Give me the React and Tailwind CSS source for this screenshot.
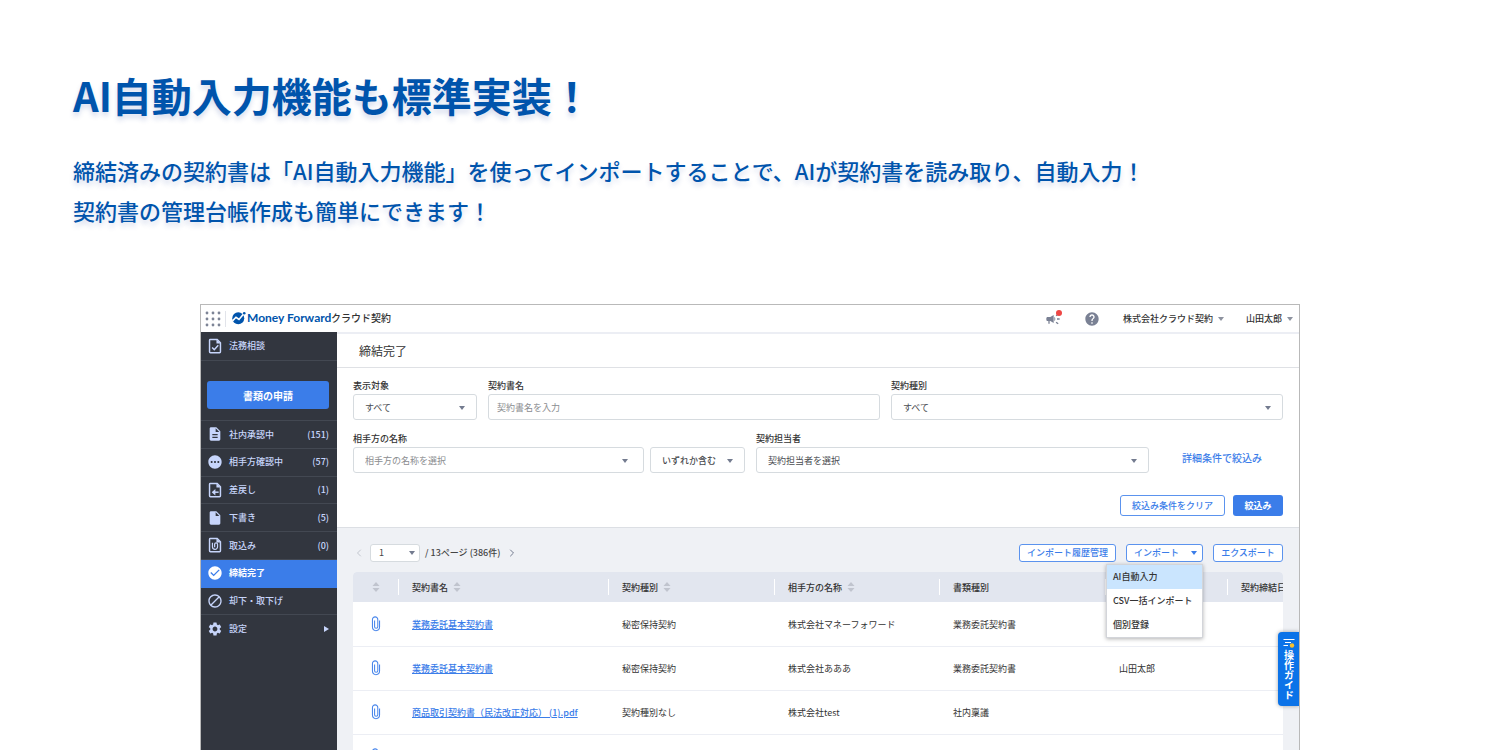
import {
    MdBlock,
    MdCampaign,
    MdCheckCircle,
    MdDescription,
    MdHelp,
    MdInsertDriveFile,
    MdPending,
    MdSettings
} from 'react-icons/md';
import { ChevronLeft, ChevronRight } from 'lucide-react';
import clsx from 'clsx';

function DocOutline({ className, children }) {
    return (
        <svg viewBox="1 1 22 22" className={className} fill="none" stroke="currentColor" strokeWidth="2">
            <path d="M5.500 3h9.500l4.500 4.500V20a1.200 1.200 0 0 1-1.200 1.200H5.700A1.200 1.200 0 0 1 4.500 20V4a1 1 0 0 1 1-1Z" />
            <path d="M14 3v5.500H20Z" fill="currentColor" stroke="none" />
            {children}
        </svg>
    );
}

const DocCheckIcon = ({ className }) => (
    <DocOutline className={className}>
        <path d="m8 14 3 3 5.500-6" />
    </DocOutline>
);

const DocReturnIcon = ({ className }) => (
    <DocOutline className={className}>
        <path d="M17 15H9" />
        <path d="m12.500 10.500-5 4.500 5 4.500Z" fill="currentColor" stroke="none" />
    </DocOutline>
);

const DocClipIcon = ({ className }) => (
    <DocOutline className={className}>
        <path d="M8.500 9v5.500a3.500 3.500 0 0 0 7 0V11a2 2 0 0 0-4 0v4" strokeWidth="1.700" />
    </DocOutline>
);

function ClipIcon() {
    return (
        <svg viewBox="0 0 10 18" className="w-2.5 h-4" fill="none" stroke="#4a87eb" strokeWidth="1.200">
            <path d="M9 5v7.500a4 4 0 0 1-8 0V4a3 3 0 0 1 6 0v8a1.800 1.800 0 0 1-3.600 0V5" />
        </svg>
    );
}

function Caret({ className }) {
    return (
        <svg viewBox="0 0 6 4" className={clsx('w-1.5 h-1', className)} fill="currentColor">
            <path d="M0 0h6L3 4Z" />
        </svg>
    );
}

function SortIcon() {
    return (
        <svg viewBox="0 0 7 10" className="w-2 h-2.5" fill="#c0c4ce">
            <path d="M3.500 0 7 4H0ZM0 6h7l-3.500 4Z" />
        </svg>
    );
}

function LogoMark() {
    return (
        <svg viewBox="0 0 28 26" className="w-3.5 h-3.5" fill="none">
            <circle cx="12.500" cy="13.500" r="12" fill="#0054ac" />
            <path d="m1 19 7-7.500 6 4.500L24 4" stroke="#fff" strokeWidth="3.200" />
            <circle cx="24.500" cy="3.500" r="2.600" fill="#0054ac" />
        </svg>
    );
}

const menuItems = [
    { label: '社内承認中', count: 151, icon: MdDescription },
    { label: '相手方確認中', count: 57, icon: MdPending },
    { label: '差戻し', count: 1, icon: DocReturnIcon },
    { label: '下書き', count: 5, icon: MdInsertDriveFile },
    { label: '取込み', count: 0, icon: DocClipIcon },
    { label: '締結完了', icon: MdCheckCircle, active: true },
    { label: '却下・取下げ', icon: MdBlock },
    { label: '設定', icon: MdSettings, hasChildren: true }
];

const columns = [
    { label: '', sortable: true, width: 'w-[45px]' },
    { label: '契約書名', sortable: true, width: 'w-[210px]' },
    { label: '契約種別', sortable: true, width: 'w-[166px]' },
    { label: '相手方の名称', sortable: true, width: 'w-[165px]' },
    { label: '書類種別', width: 'w-[166px]' },
    { label: '', width: 'w-[122px]' },
    { label: '契約締結日' }
];

const contracts = [
    { name: '業務委託基本契約書', type: '秘密保持契約', partner: '株式会社マネーフォワード', docType: '業務委託契約書' },
    { name: '業務委託基本契約書', type: '秘密保持契約', partner: '株式会社あああ', docType: '業務委託契約書', owner: '山田太郎' },
    { name: '商品取引契約書（民法改正対応） (1).pdf', type: '契約種別なし', partner: '株式会社test', docType: '社内稟議' },
    { name: '', type: '', partner: '', docType: '' }
];

const importOptions = ['AI自動入力', 'CSV一括インポート', '個別登録'];

function SelectBox({ id, value, muted, strong, className, ...rest }) {
    return (
        <div className={clsx('relative', className)}>
            <select
                id={id}
                className={clsx(
                    'block w-full h-[26px] appearance-none rounded-[3px] border border-[#d6dbdf] bg-white pt-0.5 pl-[11px] pr-6',
                    muted ? 'text-[#8b8d90]' : 'text-[#4a4c50]',
                    strong && 'font-medium'
                )}
                {...rest}
            >
                <option>{value}</option>
            </select>
            <Caret className={clsx('absolute top-3 text-[#737b8f] pointer-events-none', muted ? 'right-4' : 'right-3')} />
        </div>
    );
}

function Field({ id, label, className, children }) {
    return (
        <div className={className}>
            <label htmlFor={id} className="block h-[18px] leading-5 font-medium text-[#333]">
                {label}
            </label>
            {children}
        </div>
    );
}

function OutlineButton({ className, children, ...rest }) {
    return (
        <button
            type="button"
            className={clsx('flex items-center rounded-[3px] border border-[#5b93ee] bg-white font-medium text-[#3b7de9]', className)}
            {...rest}
        >
            {children}
        </button>
    );
}

function AppHeader() {
    return (
        <header className="h-[27px] shrink-0 flex items-center bg-white pl-1 pr-1.5 text-[9px] font-medium text-[#333]">
            <svg viewBox="0 0 16 16" className="w-4 h-4" fill="#7d8496">
                {[2, 8, 14].map((y) => [2, 8, 14].map((x) => <circle key={`${x}-${y}`} cx={x} cy={y} r="1.400" />))}
            </svg>
            <div className="ml-1 h-4 border-l border-[#e2e4ea]" />
            <div className="ml-1.5 pb-0.5 flex items-center">
                <LogoMark />
                <span className="ml-px w-[82px] font-[Lato] text-[12px] leading-4 font-bold text-[#0054ac] whitespace-nowrap">Money Forward</span>
                <span className="ml-0.5 text-[10px] leading-4">クラウド契約</span>
            </div>
            <div className="ml-auto flex items-center">
                <button type="button" aria-label="お知らせ" className="relative">
                    <MdCampaign className="w-4 h-4 text-[#7a8194]" />
                    <span className="absolute -right-px -top-px w-1.5 h-1.5 rounded-full bg-[#ee4744]" />
                </button>
                <button type="button" aria-label="ヘルプ" className="ml-[23px]">
                    <MdHelp className="w-4 h-4 text-[#7a8194]" />
                </button>
                <button type="button" className="ml-[23px] flex items-center gap-[5px]">
                    株式会社クラウド契約
                    <Caret className="text-[#8d929f]" />
                </button>
                <button type="button" className="ml-[22px] flex items-center gap-[5px]">
                    山田太郎
                    <Caret className="text-[#8d929f]" />
                </button>
            </div>
        </header>
    );
}

function Sidebar() {
    return (
        <nav className="w-[136px] shrink-0 bg-[#32363f] text-[9px] font-medium text-[#c7d5fb]">
            <a href="#consult" className="h-[29px] flex items-center pl-1.5 border-b border-[#434852]">
                <DocCheckIcon className="w-4 h-4" />
                <span className="ml-1.5">法務相談</span>
            </a>
            <div className="h-[60px] pl-1.5 pr-2 pt-5 border-b border-[#434852]">
                <button type="button" className="block w-full h-7 rounded-[3px] bg-[#3b7de9] text-[10px] font-bold text-white">
                    書類の申請
                </button>
            </div>
            <ul className="grid auto-rows-fr h-[222px]">
                {menuItems.map(({ label, count, icon: Icon, active, hasChildren }) => (
                    <li key={label} className={clsx('flex border-b', hasChildren ? 'border-transparent' : active ? 'border-[#3b7de9]' : 'border-[#434852]')}>
                        <a
                            href={`#${label}`}
                            className={clsx('flex-1 flex items-center pl-1.5 pr-2', active && 'bg-[#3b7de9] font-bold text-white')}
                        >
                            <Icon className="w-4 h-4" />
                            <span className="ml-1.5">{label}</span>
                            {count !== undefined && <span className="ml-auto">({count})</span>}
                            {hasChildren && (
                                <svg viewBox="0 0 5 6" className="ml-auto w-[5px] h-1.5" fill="currentColor">
                                    <path d="M0 0v6l5-3Z" />
                                </svg>
                            )}
                        </a>
                    </li>
                ))}
            </ul>
        </nav>
    );
}

function FilterForm() {
    return (
        <form className="px-4 pt-2 pb-[11px] bg-white border-b border-[#dcdfe4]">
            <div className="flex gap-[11px]">
                <Field id="target" label="表示対象" className="w-[124px]">
                    <SelectBox id="target" value="すべて" />
                </Field>
                <Field id="name" label="契約書名" className="flex-1">
                    <input
                        id="name"
                        type="text"
                        placeholder="契約書名を入力"
                        className="block w-full h-[26px] rounded-[3px] border border-[#d6dbdf] px-2 placeholder:text-[#8b8d90]"
                    />
                </Field>
                <Field id="type" label="契約種別" className="flex-1">
                    <SelectBox id="type" value="すべて" />
                </Field>
            </div>
            <div className="mt-[9px] flex items-end">
                <Field id="partner" label="相手方の名称" className="w-[291px]">
                    <SelectBox id="partner" value="相手方の名称を選択" muted />
                </Field>
                <SelectBox className="ml-1.5 w-[95px]" aria-label="一致条件" value="いずれか含む" strong />
                <Field id="owner" label="契約担当者" className="ml-[11px] flex-1">
                    <SelectBox id="owner" value="契約担当者を選択" />
                </Field>
                <a href="#detail" className="w-[134px] pl-[33px] leading-[26px] pb-0.5 text-[10px] font-medium text-[#3b7de9] whitespace-nowrap">
                    詳細条件で絞込み
                </a>
            </div>
            <div className="mt-[22px] flex justify-end gap-2">
                <OutlineButton className="h-[21px] w-[105px] justify-center">絞込み条件をクリア</OutlineButton>
                <button type="submit" className="h-[21px] w-[50px] rounded-[3px] bg-[#3b7de9] font-bold text-white">
                    絞込み
                </button>
            </div>
        </form>
    );
}

function Toolbar() {
    return (
        <div className="flex items-center h-[18px] text-[#444]">
            <button type="button" aria-label="前のページ">
                <ChevronLeft className="w-3 h-3 text-[#c3c7cf]" />
            </button>
            <div className="relative ml-[5px] w-[50px]">
                <select aria-label="ページ" className="block w-full h-[18px] appearance-none rounded-[3px] border border-[#d6dbdf] bg-white pl-2">
                    <option>1</option>
                </select>
                <Caret className="absolute right-[5px] top-[7px] text-[#737b8f] pointer-events-none" />
            </div>
            <span className="ml-[5px] font-medium">/ 13ページ (386件)</span>
            <button type="button" aria-label="次のページ" className="ml-1.5">
                <ChevronRight className="w-3 h-3 text-[#737b8f]" />
            </button>
            <OutlineButton className="ml-auto h-[18px] w-[97px] justify-center">インポート履歴管理</OutlineButton>
            <div className="relative ml-2.5 w-[77px]">
                <OutlineButton className="h-[18px] w-full justify-between pl-[7px] pr-[5px]" aria-expanded="true">
                    インポート
                    <Caret />
                </OutlineButton>
                <ul className="absolute right-0 top-full z-10 mt-0.5 w-[97px] border border-[#d3d5da] bg-white text-[#333] shadow-[0_1px_4px_rgba(0,0,0,0.3)]">
                    {importOptions.map((option, idx) => (
                        <li key={option}>
                            <button type="button" className={clsx('block w-full h-6 pl-1.5 text-left font-medium', idx === 0 && 'bg-[#cae5fe]')}>
                                {option}
                            </button>
                        </li>
                    ))}
                </ul>
            </div>
            <OutlineButton className="ml-2.5 h-[18px] w-[70px] justify-center">エクスポート</OutlineButton>
        </div>
    );
}

function ContractTable() {
    return (
        <div className="mt-2.5 overflow-hidden rounded-t bg-white">
            <table className="w-full table-fixed whitespace-nowrap text-left text-[#333]">
                <thead>
                    <tr className="h-[30px] bg-[#e2e6ef]">
                        {columns.map((col, idx) => (
                            <th key={idx} className={clsx('p-0 font-medium', col.width)}>
                                <div className={clsx('h-4 flex items-center gap-[5px]', idx === 0 ? 'justify-center' : 'pl-[13px] border-l border-white')}>
                                    {col.label && <span className="pt-0.5">{col.label}</span>}
                                    {col.sortable && <SortIcon />}
                                </div>
                            </th>
                        ))}
                    </tr>
                </thead>
                <tbody>
                    {contracts.map((contract, idx) => (
                        <tr key={idx} className="h-11 border-b border-[#eceef4]">
                            <td className="p-0">
                                <div className="flex justify-center">
                                    <ClipIcon />
                                </div>
                            </td>
                            <td className="p-0 pt-0.5 pl-3.5">
                                {contract.name && (
                                    <a href={`#contract-${idx}`} className="font-medium text-[#3b7de9] underline">
                                        {contract.name}
                                    </a>
                                )}
                            </td>
                            <td className="p-0 pt-0.5 pl-3.5">{contract.type}</td>
                            <td className="p-0 pt-0.5 pl-3.5">{contract.partner}</td>
                            <td className="p-0 pt-0.5 pl-3.5">{contract.docType}</td>
                            <td className="p-0 pt-0.5 pl-3.5">{contract.owner}</td>
                            <td />
                        </tr>
                    ))}
                </tbody>
            </table>
        </div>
    );
}

function GuideTab() {
    return (
        <button
            type="button"
            className="absolute right-0 top-[327px] z-10 w-[21px] h-[74px] flex flex-col items-center gap-0.5 pt-1.5 rounded-l bg-[#0b73e8] text-[10px] leading-4 font-bold text-white shadow-[0_0_4px_rgba(0,0,0,0.35)]"
        >
            <svg viewBox="0 0 12 10" className="w-3 h-2.5 shrink-0" stroke="#fff" strokeWidth="1.200">
                <path d="M.5 1.500h11M2 4.500h6M.5 7.500h4.500" />
                <circle cx="9" cy="7.500" r="2.200" fill="#fbc02d" stroke="none" />
            </svg>
            <span className="[writing-mode:vertical-rl]">操作ガイド</span>
        </button>
    );
}

export default function App() {
    return (
        <div lang="ja" className="h-screen overflow-hidden flex flex-col bg-white font-['Noto_Sans_CJK_JP',sans-serif]">
            <section className="px-[73px] pt-[65px] pb-[74px] text-[#0054ac] [text-shadow:0_4px_5px_rgba(40,70,160,0.18)]">
                <h1 className="text-[40px] leading-[60px] font-bold">AI自動入力機能も標準実装！</h1>
                <p className="mt-[25px] text-[22px] leading-10 font-medium">
                    締結済みの契約書は「AI自動入力機能」を使ってインポートすることで、AIが契約書を読み取り、自動入力！
                    <br />
                    契約書の管理台帳作成も簡単にできます！
                </p>
            </section>
            <div className="relative w-full max-w-[1100px] flex-1 min-h-0 mx-auto flex flex-col border border-b-0 border-[#b9b9b9] overflow-hidden">
                <AppHeader />
                <div className="flex-1 min-h-0 flex">
                    <Sidebar />
                    <main className="flex-1 min-w-0 bg-[#eff1f5] text-[9px]">
                        <h2 className="h-9 pl-[22px] border-b border-[#dfe1e5] border-t-2 border-t-[#eceef4] bg-white text-[12px] leading-[33px] text-[#333]">
                            締結完了
                        </h2>
                        <FilterForm />
                        <div className="px-4 pt-4">
                            <Toolbar />
                            <ContractTable />
                        </div>
                    </main>
                </div>
                <GuideTab />
            </div>
        </div>
    );
}
